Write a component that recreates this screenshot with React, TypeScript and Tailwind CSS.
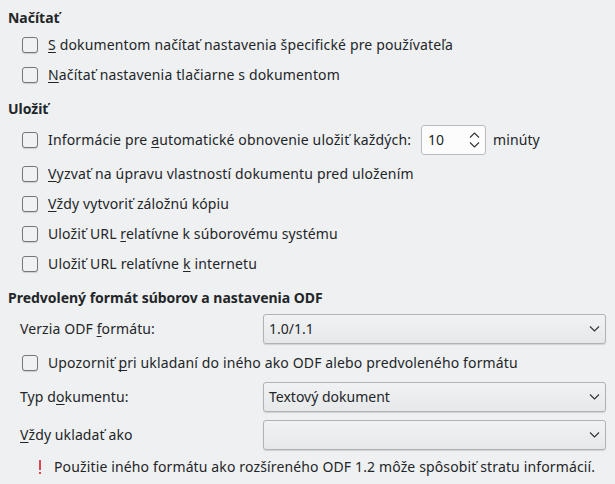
import type { ReactNode } from "react";

function Key({ children }: { children: ReactNode }) {
  return (
    <span className="underline decoration-1 underline-offset-2 [text-decoration-skip-ink:none]">
      {children}
    </span>
  );
}

function Heading({ children }: { children: ReactNode }) {
  return <h2 className="flex h-5 items-center pl-2 font-bold tracking-[-0.02px]">{children}</h2>;
}

function Check({ children, tracking = "tracking-[0.15px]" }: { children: ReactNode; tracking?: string }) {
  return (
    <label className="flex h-[30px] items-center pl-[22px]">
      <span className="mr-[10px] size-4 shrink-0 rounded-[3px] border border-[#75777a] bg-[#f0f1f2] shadow-[0_1px_1px_rgba(0,0,0,0.15)]" />
      <span className={tracking}>{children}</span>
    </label>
  );
}

function Select({ label, value }: { label: ReactNode; value: string }) {
  return (
    <div className="flex h-[30px] items-center pl-5">
      <span className="w-[243px] tracking-[0.1px]">{label}</span>
      <div className="flex h-[30px] w-[343px] items-center justify-between rounded-[3px] border border-[#b0b2b4] bg-linear-to-b from-[#f1f2f3] to-[#e7e8ea] pr-[5px] pl-[5px] shadow-[0_1px_1px_rgba(0,0,0,0.13)]">
        <span>{value}</span>
        <svg width="11" height="8" viewBox="0 0 11 8" fill="none" stroke="#2f3235" strokeWidth="1.1">
          <path d="M1 1.5 5.5 6 10 1.5" />
        </svg>
      </div>
    </div>
  );
}

export default function App() {
  return (
    <main className="flex h-[484px] w-[615px] flex-col overflow-hidden bg-[#eff0f1] pt-2 font-['Noto_Sans',sans-serif] text-[14px] leading-5 whitespace-nowrap text-[#232629]">
      <Heading>Načítať</Heading>
      <section className="mt-[2px] mb-[9px]">
        <Check><Key>S</Key> dokumentom načítať nastavenia špecifické pre používateľa</Check>
        <Check><Key>N</Key>ačítať nastavenia tlačiarne s dokumentom</Check>
      </section>
      <Heading>Uložiť</Heading>
      <section className="mt-[6px] mb-[9px]">
        <div className="mb-1 flex h-[30px] items-center">
          <div className="w-[421px]">
            <Check>Informácie pre <Key>a</Key>utomatické obnovenie uložiť každých:</Check>
          </div>
          <div className="flex h-[30px] w-[65px] items-center justify-between rounded-[3px] border border-[#b9bbbd] bg-[#fcfcfc] pr-[5px] pl-[6px]">
            <span>10</span>
            <svg width="11" height="18" viewBox="0 0 11 18" fill="none" stroke="#2f3235" strokeWidth="1.1">
              <path d="M1 6.5 5.5 2 10 6.5M1 11.5 5.5 16 10 11.5" />
            </svg>
          </div>
          <span className="ml-[7px] tracking-[0.1px]">minúty</span>
        </div>
        <Check tracking="tracking-[0.165px]"><Key>V</Key>yzvať na úpravu vlastností dokumentu pred uložením</Check>
        <Check tracking="tracking-[0.11px]"><Key>V</Key>ždy vytvoriť záložnú kópiu</Check>
        <Check tracking="tracking-[0.125px]">Uložiť URL <Key>r</Key>elatívne k súborovému systému</Check>
        <Check>Uložiť URL relatívne <Key>k</Key> internetu</Check>
      </section>
      <Heading>Predvolený formát súborov a nastavenia ODF</Heading>
      <section className="mt-[6px]">
        <Select label={<>Verzia ODF <Key>f</Key>ormátu:</>} value="1.0/1.1" />
        <div className="my-1">
          <Check tracking="tracking-[0.14px]">Upozorniť <Key>p</Key>ri ukladaní do iného ako ODF alebo predvoleného formátu</Check>
        </div>
        <Select label={<>Typ d<Key>o</Key>kumentu:</>} value="Textový dokument" />
        <div className="mt-2">
          <Select label={<><Key>V</Key>ždy ukladať ako</>} value="" />
        </div>
      </section>
      <div className="mt-[7px] flex h-5 items-center pl-[39px]">
        <svg width="2" height="14" viewBox="0 0 2 14" fill="#da4453" className="mr-[13px]">
          <path d="M0 0h2v10H0zM0 12h2v2H0z" />
        </svg>
        <span className="tracking-[0.135px]">Použitie iného formátu ako rozšíreného ODF 1.2 môže spôsobiť stratu informácií.</span>
      </div>
    </main>
  );
}
